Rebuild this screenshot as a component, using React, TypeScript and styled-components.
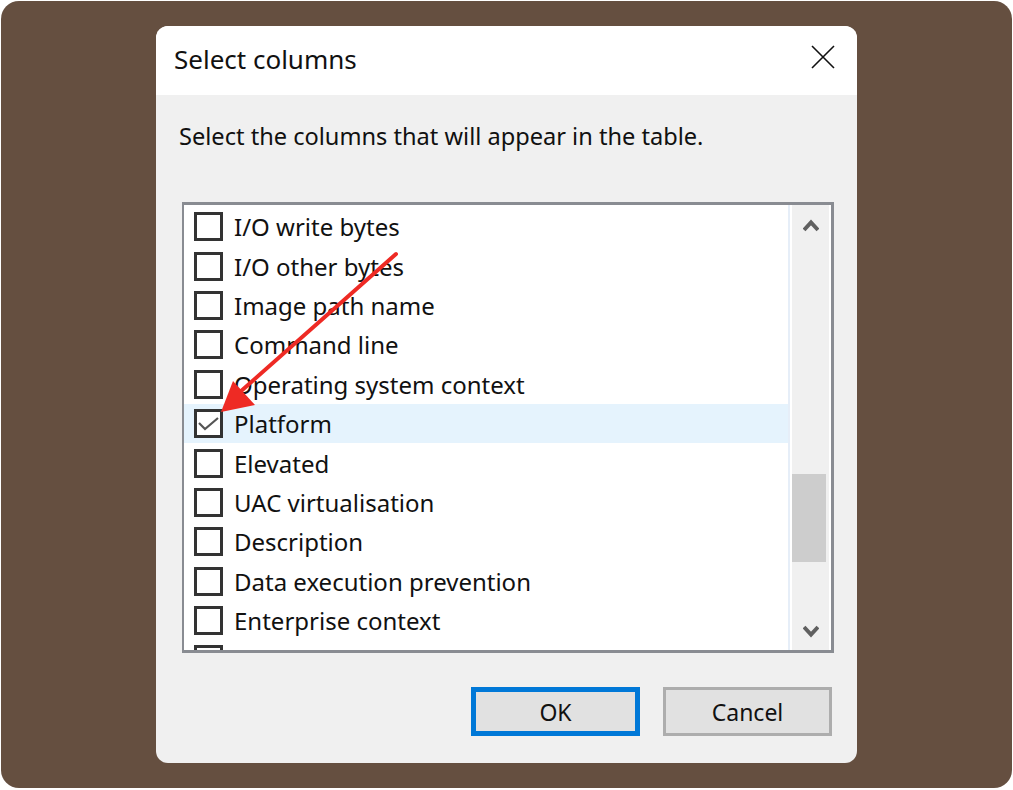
import React from "react";
import styled, { createGlobalStyle } from "styled-components";

const GlobalStyle = createGlobalStyle`
  html, body { margin: 0; padding: 0; background: #ffffff; }
  * { box-sizing: border-box; }
`;

const Frame = styled.div`
  position: relative;
  width: 1013px;
  height: 790px;
  padding: 1px 1px 2px 1px;
  background: #ffffff;
  font-family: "Noto Sans", "Open Sans", sans-serif;
`;

const Backdrop = styled.div`
  width: 100%;
  height: 100%;
  background: #654f40;
  border-radius: 18px;
  display: flex;
  align-items: center;
  justify-content: center;
`;

const Dialog = styled.div`
  width: 701px;
  height: 737px;
  border-radius: 12px;
  overflow: hidden;
  background: #f0f0f0;
  display: flex;
  flex-direction: column;
`;

const TitleBar = styled.div`
  height: 69px;
  background: #ffffff;
  display: flex;
  align-items: center;
  justify-content: space-between;
  padding: 0 22px 0 18px;
  flex-shrink: 0;
`;

const Title = styled.div`
  font-size: 26px;
  color: #111111;
  margin-top: -3px;
`;

const CloseButton = styled.div`
  width: 24px;
  height: 24px;
  display: flex;
  align-items: center;
  justify-content: center;
  margin-top: -8px;
`;

const Body = styled.div`
  flex: 1;
  display: flex;
  flex-direction: column;
  padding: 0 23px 0 26px;
`;

const Prompt = styled.div`
  font-size: 23.6px;
  color: #111111;
  margin: 26px 0 0 -3px;
  height: 30px;
  line-height: 30px;
  white-space: nowrap;
`;

const ListBox = styled.div`
  margin-top: 51px;
  width: 652px;
  height: 451px;
  border: 3px solid #898c92;
  border-left-width: 2px;
  background: #ffffff;
  display: flex;
  overflow: hidden;
`;

const ListContent = styled.div`
  width: 604px;
  padding-top: 2px;
  overflow: hidden;
`;

const Row = styled.div<{ $selected?: boolean }>`
  height: 39.4px;
  display: flex;
  align-items: center;
  padding-left: 10px;
  background: ${(p) => (p.$selected ? "#e5f3fd" : "transparent")};
`;

const Box = styled.div`
  width: 29px;
  height: 29px;
  border: 3px solid #333333;
  background: #ffffff;
  flex-shrink: 0;
  display: flex;
  align-items: center;
  justify-content: center;
`;

const Label = styled.span`
  margin-left: 11px;
  font-size: 24px;
  color: #111111;
  white-space: nowrap;
`;

const ScrollGutter = styled.div`
  width: 43px;
  border-left: 2px solid #e6eef8;
  padding: 0 2px 0 2px;
  display: flex;
`;

const Track = styled.div`
  flex: 1;
  background: #f0f0f0;
  display: flex;
  flex-direction: column;
  align-items: center;
  justify-content: space-between;
  padding: 14px 0 12px 0;
`;

const ThumbArea = styled.div`
  flex: 1;
  width: 100%;
  display: flex;
  flex-direction: column;
  justify-content: flex-start;
  padding-top: 242px;
`;

const Thumb = styled.div`
  width: 34px;
  height: 88px;
  background: #cdcdcd;
`;

const ButtonRow = styled.div`
  display: flex;
  justify-content: flex-end;
  gap: 23px;
  margin-top: 34px;
  padding-right: 2px;
`;

const Button = styled.div<{ $primary?: boolean }>`
  width: 169px;
  height: 49px;
  background: #e1e1e1;
  border: ${(p) => (p.$primary ? "5px solid #0078d7" : "3px solid #adadad")};
  display: flex;
  align-items: center;
  justify-content: center;
  font-size: 23px;
  color: #111111;
`;

const ArrowOverlay = styled.svg`
  position: absolute;
  left: 0;
  top: 0;
  pointer-events: none;
`;

const items = [
  "I/O write bytes",
  "I/O other bytes",
  "Image path name",
  "Command line",
  "Operating system context",
  "Platform",
  "Elevated",
  "UAC virtualisation",
  "Description",
  "Data execution prevention",
  "Enterprise context",
  "",
];

export default function App() {
  return (
    <>
      <GlobalStyle />
      <Frame>
        <Backdrop>
          <Dialog>
            <TitleBar>
              <Title>Select columns</Title>
              <CloseButton>
                <svg width="24" height="24" viewBox="0 0 24 24">
                  <path d="M1 1 L23 23 M23 1 L1 23" stroke="#111" strokeWidth="1.6" />
                </svg>
              </CloseButton>
            </TitleBar>
            <Body>
              <Prompt>Select the columns that will appear in the table.</Prompt>
              <ListBox>
                <ListContent>
                  {items.map((it, i) => (
                    <Row key={i} $selected={it === "Platform"}>
                      <Box>
                        {it === "Platform" && (
                          <svg width="23" height="23" viewBox="0 0 23 23">
                            <path d="M2 11 L8 17 L21 6" stroke="#555" strokeWidth="2.2" fill="none" />
                          </svg>
                        )}
                      </Box>
                      <Label>{it}</Label>
                    </Row>
                  ))}
                </ListContent>
                <ScrollGutter>
                  <Track>
                    <svg width="16" height="13" viewBox="0 0 16 13">
                      <path d="M1 11 L8 3.5 L15 11" stroke="#606060" strokeWidth="4" fill="none" />
                    </svg>
                    <ThumbArea>
                      <Thumb />
                    </ThumbArea>
                    <svg width="16" height="13" viewBox="0 0 16 13">
                      <path d="M1 2 L8 9.5 L15 2" stroke="#606060" strokeWidth="4" fill="none" />
                    </svg>
                  </Track>
                </ScrollGutter>
              </ListBox>
              <ButtonRow>
                <Button $primary>OK</Button>
                <Button>Cancel</Button>
              </ButtonRow>
            </Body>
          </Dialog>
        </Backdrop>
        <ArrowOverlay width="1013" height="790" viewBox="0 0 1013 790">
          <line x1="396" y1="254" x2="240" y2="392" stroke="#ee2a24" strokeWidth="4" strokeLinecap="round" />
          <polygon points="221,412 233,381 255,405" fill="#ee2a24" />
        </ArrowOverlay>
      </Frame>
    </>
  );
}
